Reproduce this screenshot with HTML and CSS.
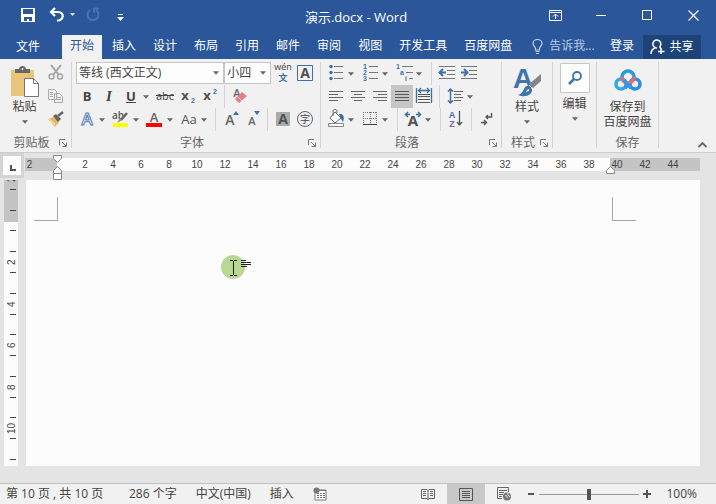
FILE: index.html
```html
<!DOCTYPE html>
<html lang="zh-CN">
<head>
<meta charset="utf-8">
<title>演示.docx - Word</title>
<link rel="stylesheet" href="styles.css">
</head>
<body>
<svg class="defs" aria-hidden="true">
  <symbol id="caret" viewBox="0 0 7 4"><path d="M0 0h7L3.500 4z" fill="#666"/></symbol>
  <symbol id="launch" viewBox="0 0 8 8"><path d="M.5 6V.5H6M3 3l4 4M7.500 3.500v4h-4" fill="none" stroke="#777"/></symbol>
</svg>

<header class="titlebar">
  <div class="quick">
    <button class="qbtn" aria-label="保存"><svg width="16" height="16" viewBox="0 0 16 16"><path d="M1 1h14v14H1z" fill="#fff"/><path d="M4 2h9v5H3V2z" fill="#2b579a"/><path d="M4 10h8v4H9v-2H7v2H4z" fill="#2b579a"/></svg></button>
    <button class="qbtn" aria-label="撤消"><svg width="16" height="16" viewBox="0 0 16 16"><path d="M6 1L2 5l4 4M2.500 5H9c7 0 6 9-1 8.500" fill="none" stroke="#fff" stroke-width="2.200"/></svg></button>
    <button class="qcaret" aria-label="撤消选项"><svg width="5" height="3" viewBox="0 0 6 3"><path d="M0 0h6L3 3z" fill="#fff"/></svg></button>
    <button class="qbtn redo" aria-label="重复"><svg width="16" height="16" viewBox="0 0 16 16"><path d="M5 3a5.500 5.500 0 1 0 6 0M9 6V1.500h5" fill="none" stroke="#4a73b0" stroke-width="2"/></svg></button>
    <button class="qbtn more" aria-label="自定义快速访问工具栏"><svg width="7" height="7" viewBox="0 0 7 7"><path d="M1 0h5v1H1zM0 3h7L3.500 7z" fill="#fff"/></svg></button>
  </div>
  <h1 class="doc-title">演示.docx - Word</h1>
  <div class="window-buttons">
    <button aria-label="功能区显示选项"><svg width="13" height="11" viewBox="0 0 13 11"><path d="M.5.5h12v10H.5zM.5 2.500h12M6.500 9V4M4 6.500L6.500 4 9 6.500" fill="none" stroke="#fff"/></svg></button>
    <button aria-label="最小化"><svg width="11" height="11" viewBox="0 0 11 11"><path d="M0 5.500h10" stroke="#fff"/></svg></button>
    <button aria-label="最大化"><svg width="11" height="11" viewBox="0 0 11 11"><path d="M.5.5h9v9h-9z" fill="none" stroke="#fff"/></svg></button>
    <button aria-label="关闭"><svg width="11" height="11" viewBox="0 0 11 11"><path d="M.5.5l10 10M10.500.5l-10 10" stroke="#fff" stroke-width="1.200"/></svg></button>
  </div>
</header>

<nav class="tabs">
  <button class="tab file">文件</button>
  <button class="tab active">开始</button>
  <button class="tab">插入</button>
  <button class="tab">设计</button>
  <button class="tab">布局</button>
  <button class="tab">引用</button>
  <button class="tab">邮件</button>
  <button class="tab">审阅</button>
  <button class="tab">视图</button>
  <button class="tab">开发工具</button>
  <button class="tab">百度网盘</button>
  <label class="tell"><svg width="11" height="15" viewBox="0 0 11 15"><path d="M3.500 11V9.500C3.500 8 1 7 1 4.500a4.500 4 0 0 1 9 0C10 7 7.500 8 7.500 9.500V11zM3.500 12.500h4M4 14.500h3" fill="none" stroke="#c3d2ea" stroke-width="1.200"/></svg><input type="text" placeholder="告诉我..." aria-label="告诉我"></label>
  <button class="tab login">登录</button>
  <button class="share"><svg width="15" height="16" viewBox="0 0 15 16"><path d="M7 9a4 4 0 1 1 2.500-1M5 9c-3 1-4 3-4 6M9.500 8c1 1 1.500 1 2 2M11 9v6M8 12.500h6.500" fill="none" stroke="#fff" stroke-width="1.500"/></svg>共享</button>
</nav>

<main class="ribbon">
  <section class="group clipboard">
    <div class="group-body">
      <button class="big paste"><svg width="30" height="32" viewBox="0 0 30 32"><path d="M1 4h23v26H1z" fill="#e9c47b"/><path d="M5 7V3h4c0-4 7-4 7 0h4v4z" fill="#666"/><circle cx="12.500" cy="3" r="1" fill="#fff"/><path d="M14.500 12.500h9l5 5v13h-14z" fill="#fff" stroke="#777"/><path d="M23.500 12.500v5h5" fill="none" stroke="#777"/></svg><span>粘贴</span><svg class="caret"><use href="#caret"/></svg></button>
      <div class="stack">
        <button class="tool" aria-label="剪切"><svg viewBox="0 0 22 23"><path d="M6 3l8 10M16 3L8 13" stroke="#a3a3a3" stroke-width="2"/><g fill="none" stroke="#a3a3a3" stroke-width="1.500"><circle cx="6.500" cy="14.500" r="2.500"/><circle cx="15" cy="14.500" r="2.500"/></g></svg></button>
        <button class="tool" aria-label="复制"><svg viewBox="0 0 22 23"><path d="M3.500 4.500h6l2 2v8h-8zM9.500 8.500h5l3 3v6h-8z" fill="#f3f3f3" stroke="#aaa"/><path d="M5 7.500h3M5 9.500h3M5 11.500h3M11 12.500h5M11 14.500h5" stroke="#aaa"/></svg></button>
        <button class="tool" aria-label="格式刷"><svg viewBox="0 0 22 23"><path d="M3 11l6-2 5 5-4 5z" fill="#e8b565"/><path d="M5 13l5 4M4 11l6 5" stroke="#fbe3b5"/><path d="M8 8l3-2 5 5-3 3z" fill="#666"/><path d="M13 8l5-4" stroke="#666" stroke-width="2.500"/></svg></button>
      </div>
    </div>
    <footer><span>剪贴板</span><button aria-label="剪贴板设置"><svg><use href="#launch"/></svg></button></footer>
  </section>

  <section class="group font">
    <div class="group-body rows">
      <div class="row">
        <div class="combo family"><select aria-label="字体"><option>等线 (西文正文)</option></select><svg class="caret"><use href="#caret"/></svg></div>
        <div class="combo size"><select aria-label="字号"><option>小四</option></select><svg class="caret"><use href="#caret"/></svg></div>
        <button class="tool" aria-label="拼音指南"><svg viewBox="0 0 22 23"><text x="11" y="8" class="pinyin">wén</text><text x="11" y="19" class="wen">文</text></svg></button>
        <button class="tool" aria-label="字符边框"><svg viewBox="0 0 22 23"><path d="M3.500 3.500h15v15h-15z" fill="none" stroke="#3f6fa8"/><text x="11" y="16" class="ic a14">A</text></svg></button>
      </div>
      <div class="row">
        <button class="tool letter"><b>B</b></button>
        <button class="tool letter serif"><i>I</i></button>
        <button class="tool letter"><u>U</u></button>
        <button class="drop" aria-label="下划线选项"><svg class="caret"><use href="#caret"/></svg></button>
        <button class="tool strike"><s>abc</s></button>
        <button class="tool" aria-label="下标"><svg viewBox="0 0 22 23"><text x="9" y="15" class="ic a13">x</text><text x="17" y="18" class="blue n7">2</text></svg></button>
        <button class="tool" aria-label="上标"><svg viewBox="0 0 22 23"><text x="9" y="15" class="ic a13">x</text><text x="17" y="9" class="blue n7">2</text></svg></button>
        <i class="sep"></i>
        <button class="tool" aria-label="清除所有格式"><svg viewBox="0 0 22 23"><text x="8" y="12" class="ic a11 light">A</text><path d="M6 14l7-7 5 4-8 7z" fill="#e37d8b"/><path d="M8 11l5 5" stroke="#f5d4d9"/></svg></button>
      </div>
      <div class="row">
        <button class="tool" aria-label="文本效果"><svg viewBox="0 0 22 23"><text x="11" y="17" class="effect">A</text></svg></button>
        <button class="drop" aria-label="文本效果选项"><svg class="caret"><use href="#caret"/></svg></button>
        <button class="tool" aria-label="突出显示颜色"><svg viewBox="0 0 22 23"><text x="8" y="11" class="ab">ab</text><path d="M17 5l-6 7" stroke="#666" stroke-width="2.500"/><path d="M10 10l-3 5 5-3z" fill="#888"/><path d="M3 15h15v4H3z" fill="#ff0"/></svg></button>
        <button class="drop" aria-label="突出显示选项"><svg class="caret"><use href="#caret"/></svg></button>
        <button class="tool" aria-label="字体颜色"><svg viewBox="0 0 22 23"><text x="10" y="14" class="ic a13 light">A</text><path d="M2 15h16v4H2z" fill="#f00"/></svg></button>
        <button class="drop" aria-label="字体颜色选项"><svg class="caret"><use href="#caret"/></svg></button>
        <button class="tool aa">Aa</button>
        <button class="drop" aria-label="更改大小写选项"><svg class="caret"><use href="#caret"/></svg></button>
        <i class="sep near"></i>
        <button class="tool" aria-label="增大字号"><svg viewBox="0 0 22 23"><text x="10" y="17" class="ic a14 light">A</text><path d="M13 7l3-4 3 4z" fill="#3f6fa8"/></svg></button>
        <button class="tool" aria-label="减小字号"><svg viewBox="0 0 22 23"><text x="10" y="17" class="ic a11 light">A</text><path d="M12 3h6l-3 4z" fill="#3f6fa8"/></svg></button>
        <i class="sep near"></i>
        <button class="tool" aria-label="字符底纹"><svg viewBox="0 0 22 23"><path d="M4 4h14v14H4z" fill="#aaa"/><text x="11" y="16" class="ic a14">A</text></svg></button>
        <button class="tool" aria-label="带圈字符"><svg viewBox="0 0 22 23"><circle cx="11" cy="11" r="7.500" fill="none" stroke="#666"/><text x="11" y="15" class="ring">字</text></svg></button>
      </div>
    </div>
    <footer><span>字体</span><button aria-label="字体设置"><svg><use href="#launch"/></svg></button></footer>
  </section>

  <section class="group paragraph">
    <div class="group-body rows">
      <div class="row">
        <button class="tool" aria-label="项目符号"><svg viewBox="0 0 22 23"><g fill="#3f6fa8"><circle cx="6" cy="4.500" r="1.700"/><circle cx="6" cy="10.500" r="1.700"/><circle cx="6" cy="16.500" r="1.700"/></g><path d="M9 4.500h9M9 10.500h9M9 16.500h9" stroke="#777"/></svg></button>
        <button class="drop" aria-label="项目符号选项"><svg class="caret"><use href="#caret"/></svg></button>
        <button class="tool" aria-label="编号"><svg viewBox="0 0 22 23"><text x="6" y="7" class="blue n7">1</text><text x="6" y="13" class="blue n7">2</text><text x="6" y="19" class="blue n7">3</text><path d="M10 4.500h9M10 10.500h9M10 16.500h9" stroke="#777"/></svg></button>
        <button class="drop" aria-label="编号选项"><svg class="caret"><use href="#caret"/></svg></button>
        <button class="tool" aria-label="多级列表"><svg viewBox="0 0 22 23"><text x="5" y="7" class="blue n7">1</text><text x="9" y="13" class="blue n7">a</text><text x="13" y="19" class="blue n7">i</text><path d="M9 4.500h11M13 10.500h7M16 16.500h4" stroke="#777"/></svg></button>
        <button class="drop" aria-label="多级列表选项"><svg class="caret"><use href="#caret"/></svg></button>
        <i class="sep"></i>
        <button class="tool" aria-label="减少缩进量"><svg viewBox="0 0 22 23"><path d="M3 4.500h16M11 8.500h8M11 12.500h8M3 16.500h16" stroke="#777"/><path d="M10 10.500H4M7 7l-3.500 3.500L7 14" fill="none" stroke="#3f6fa8" stroke-width="2"/></svg></button>
        <button class="tool" aria-label="增加缩进量"><svg viewBox="0 0 22 23"><path d="M3 4.500h16M11 8.500h8M11 12.500h8M3 16.500h16" stroke="#777"/><path d="M3 10.500h6M6 7l3.500 3.500L6 14" fill="none" stroke="#3f6fa8" stroke-width="2"/></svg></button>
      </div>
      <div class="row">
        <button class="tool" aria-label="左对齐"><svg viewBox="0 0 22 23"><path d="M4 6.500h14M4 9.500h9M4 12.500h14M4 15.500h9" stroke="#666"/></svg></button>
        <button class="tool" aria-label="居中"><svg viewBox="0 0 22 23"><path d="M4 6.500h14M7 9.500h8M4 12.500h14M7 15.500h8" stroke="#666"/></svg></button>
        <button class="tool" aria-label="右对齐"><svg viewBox="0 0 22 23"><path d="M4 6.500h14M9 9.500h9M4 12.500h14M9 15.500h9" stroke="#666"/></svg></button>
        <button class="tool pressed" aria-label="两端对齐" aria-pressed="true"><svg viewBox="0 0 22 23"><path d="M4 6.500h14M4 9.500h14M4 12.500h14M4 15.500h14" stroke="#555"/></svg></button>
        <button class="tool" aria-label="分散对齐"><svg viewBox="0 0 22 23"><path d="M3.500 3v15M18.500 3v15M6 5.500h10M8 3L5.500 5.500 8 8M14 3l2.500 2.500L14 8" fill="none" stroke="#3f6fa8" stroke-width="1.300"/><path d="M5 9.500h12M5 11.500h12M5 14.500h12M5 17.500h12" stroke="#555"/></svg></button>
        <i class="sep"></i>
        <button class="tool" aria-label="行和段落间距"><svg viewBox="0 0 22 23"><path d="M6.500 4v14M4 6.500L6.500 4 9 6.500M4 15.500L6.500 18 9 15.500" fill="none" stroke="#3f6fa8" stroke-width="1.500"/><path d="M10 6.500h9M10 9.500h7M10 12.500h9M10 15.500h7" stroke="#666"/></svg></button>
        <button class="drop" aria-label="间距选项"><svg class="caret"><use href="#caret"/></svg></button>
      </div>
      <div class="row">
        <button class="tool" aria-label="底纹"><svg viewBox="0 0 22 23"><path d="M3.500 15.500h15v3h-15z" fill="#fff" stroke="#888"/><path d="M5 10l5-6 6 6-6 5z" fill="#fff" stroke="#666"/><path d="M8 8V3c0-2 4-2 4 0v2" fill="none" stroke="#666"/><path d="M14 6c4-1 6 3 4 8l-2-3z" fill="#3f6fa8"/></svg></button>
        <button class="drop" aria-label="底纹选项"><svg class="caret"><use href="#caret"/></svg></button>
        <button class="tool" aria-label="边框"><svg viewBox="0 0 22 23"><path d="M4 4.500h14M4 10.500h14M4.500 4v13M11.500 4v13M17.500 4v13" stroke="#777" stroke-dasharray="1 1"/><path d="M4 16.500h14" stroke="#444"/></svg></button>
        <button class="drop" aria-label="边框选项"><svg class="caret"><use href="#caret"/></svg></button>
        <i class="sep"></i>
        <button class="tool" aria-label="中文版式"><svg viewBox="0 0 22 23"><text x="11" y="18" class="ic wideA">A</text><path d="M8 6.500H4M6 4L3.500 6.500 6 9M14 6.500h4M16 4l2.500 2.500L16 9" fill="none" stroke="#3f6fa8" stroke-width="1.500"/></svg></button>
        <button class="drop" aria-label="中文版式选项"><svg class="caret"><use href="#caret"/></svg></button>
        <i class="sep"></i>
        <button class="tool" aria-label="排序"><svg viewBox="0 0 22 23"><text x="7" y="10" class="blue n9">A</text><text x="7" y="19" class="blue n9 z">Z</text><path d="M14.500 3v14M12 14l2.500 3 2.500-3" fill="none" stroke="#555" stroke-width="1.300"/></svg></button>
        <i class="sep"></i>
        <button class="tool" aria-label="显示编辑标记"><svg viewBox="0 0 22 23"><path d="M15.500 5v4H10M12 7l-2 2 2 2M5 14.500h5M8 12l2.500 2.500L8 17" fill="none" stroke="#555" stroke-width="1.400"/></svg></button>
      </div>
    </div>
    <footer><span>段落</span><button aria-label="段落设置"><svg><use href="#launch"/></svg></button></footer>
  </section>

  <section class="group styles">
    <div class="group-body">
      <button class="big"><svg width="30" height="32" viewBox="0 0 30 32"><text x="11" y="22" class="style-a">A</text><path d="M29 8v7l-8 7-4-4z" fill="#858585"/><path d="M17 19l4 4" stroke="#fff"/><path d="M16 20c-5-1-3 7-10 9 7 3 15 0 14-6z" fill="#3f75ad"/><path d="M15 24l2-1v2l-3 1z" fill="#fff"/></svg><span>样式</span><svg class="caret"><use href="#caret"/></svg></button>
    </div>
    <footer><span>样式</span><button aria-label="样式设置"><svg><use href="#launch"/></svg></button></footer>
  </section>

  <section class="group edit">
    <div class="group-body">
      <button class="big"><svg width="30" height="30" viewBox="0 0 30 30"><path d="M.5.5h29v29H.5z" fill="#fdfdfd" stroke="#c6c6c6"/><circle cx="17" cy="13" r="4" fill="none" stroke="#3f75ad" stroke-width="1.800"/><path d="M14 16l-5 5" stroke="#3f75ad" stroke-width="2.500"/></svg><span>编辑</span><svg class="caret"><use href="#caret"/></svg></button>
    </div>
  </section>

  <section class="group save">
    <div class="group-body">
      <button class="big"><svg width="30" height="32" viewBox="0 0 30 32"><g fill="none" stroke-width="3.600"><circle cx="8" cy="18" r="5" stroke="#30a9e8"/><circle cx="22" cy="18" r="5" stroke="#2d8de0"/><path d="M9 11a6 6 0 0 1 12 0" stroke="#249ce4"/><path d="M9 11a6 6 0 0 0 12 0" stroke="#e96872"/><path d="M11 14l7 8M12 22l2-2" stroke="#2f99e3"/></g></svg><span>保存到</span><span>百度网盘</span></button>
    </div>
    <footer><span>保存</span></footer>
  </section>
  <button class="collapse" aria-label="折叠功能区"><svg width="9" height="6" viewBox="0 0 9 6"><path d="M.5 5l4-4 4 4" fill="none" stroke="#666" stroke-width="1.800"/></svg></button>
</main>

<section class="workspace">
  <div class="tab-stop"><button aria-label="制表符"><svg width="6" height="6" viewBox="0 0 6 6"><path d="M1 0v5h5" fill="none" stroke="#555" stroke-width="2"/></svg></button></div>
  <div class="hruler">
    <div class="numbers"><span class="first">2</span><span></span><span>2</span><span>4</span><span>6</span><span>8</span><span>10</span><span>12</span><span>14</span><span>16</span><span>18</span><span>20</span><span>22</span><span>24</span><span>26</span><span>28</span><span>30</span><span>32</span><span>34</span><span>36</span><span>38</span><span>40</span><span>42</span><span>44</span></div>
    <svg class="marker left" width="9" height="25" viewBox="0 0 9 25"><path d="M.5.5h8v3l-4 4-4-4zM4.500 11.500l4 4v3h-8v-3zM.5 18.500h8v6h-8z" fill="#fff" stroke="#888"/></svg>
    <svg class="marker right" width="9" height="8" viewBox="0 0 9 8"><path d="M4.500.5l4 4v3h-8v-3z" fill="#fff" stroke="#888"/></svg>
  </div>
  <div class="vruler"><div class="ticks"><i><span>2</span></i><i></i><i></i><i></i><i><span>2</span></i><i></i><i><span>4</span></i><i></i><i><span>6</span></i><i></i><i><span>8</span></i><i></i><i><span>10</span></i><i></i></div></div>
  <article class="page">
    <i class="corner start"></i><i class="corner end"></i>
    <svg class="pointer" width="32" height="24" viewBox="0 0 32 24"><circle cx="12" cy="12" r="12" fill="#b9d893"/><path d="M9 5.500h3M13 5.500h3M12.500 6v14M9 20.500h3M13 20.500h3" stroke="#222"/><path d="M20 5.500h5M20 7.500h10M20 9.500h10M20 11.500h6" stroke="#222"/></svg>
  </article>
</section>

<footer class="status">
  <span class="pages">第 10 页 , 共 10 页</span>
  <span class="words">286 个字</span>
  <span class="lang">中文(中国)</span>
  <span class="mode">插入</span>
  <button class="macro" aria-label="录制宏"><svg width="14" height="14" viewBox="0 0 14 14"><path d="M3 3h10v10H2V6" fill="#fff" stroke="#777"/><path d="M4 6.500h2M7 6.500h2M10 6.500h2M4 8.500h2M7 8.500h2M10 8.500h2M4 10.500h2M7 10.500h2M10 10.500h2M6 3.500h7" stroke="#777"/><circle cx="3.500" cy="3.500" r="3" fill="#777"/></svg></button>
  <div class="views">
    <button aria-label="阅读视图"><svg width="14" height="13" viewBox="0 0 14 13"><path d="M.5 1.500H6l1 1 1-1h5.500v9H8l-1 1-1-1H.5zM7 2v10M2 3.500h3M2 5.500h3M2 7.500h3M9 3.500h3M9 5.500h3M9 7.500h3" fill="none" stroke="#666"/></svg></button>
    <button class="on" aria-label="页面视图"><svg width="14" height="13" viewBox="0 0 14 13"><path d="M.5.5h13v12H.5zM3 3.500h8M3 5.500h8M3 7.500h8M3 9.500h8" fill="none" stroke="#555"/></svg></button>
    <button aria-label="Web 版式视图"><svg width="14" height="14" viewBox="0 0 14 14"><path d="M5 11.500H.5v-11h11V5M2 3.500h8M2 5.500h5M2 7.500h4M2 9.500h3" fill="none" stroke="#666"/><circle cx="10" cy="9.500" r="4" fill="#777"/><path d="M8 8l2 1v2M11 6v2l2 2" fill="none" stroke="#ddd"/></svg></button>
  </div>
  <button class="zoom-step" aria-label="缩小"><svg width="8" height="8" viewBox="0 0 8 8"><path d="M1 4h6" stroke="#555" stroke-width="2"/></svg></button>
  <input class="zoom" type="range" min="10" max="190" value="100" aria-label="显示比例">
  <button class="zoom-step" aria-label="放大"><svg width="8" height="8" viewBox="0 0 8 8"><path d="M0 4h8M4 0v8" stroke="#555" stroke-width="2"/></svg></button>
  <span class="percent">100%</span>
</footer>
</body>
</html>
```
FILE: styles.css
```css
* { box-sizing: border-box; }

body {
  margin: 0;
  height: 100vh;
  display: flex;
  flex-direction: column;
  overflow: hidden;
  background: #e4e4e4;
  color: #444;
  font: 12px/16px "Open Sans", "Noto Sans CJK SC", sans-serif;
}

button, input, select { font: inherit; color: inherit; }

button {
  border: 0;
  margin: 0;
  padding: 0;
  background: none;
  display: flex;
  align-items: center;
  justify-content: center;
}

svg { display: block; flex: none; }
.defs { position: absolute; width: 0; height: 0; }
.caret { width: 6px; height: 4px; }

/* Title bar */
.titlebar {
  display: grid;
  grid-template-columns: 1fr auto 1fr;
  height: 35px;
  background: #2b579a;
  color: #fff;
}
.quick { display: flex; align-items: center; padding: 0 0 6px 18px; }
.qbtn { width: 20px; height: 20px; margin-right: 9px; }
.qbtn.redo { margin-right: 7px; }
.qcaret { width: 6px; height: 20px; margin: 0 8px 0 -7px; }
.qbtn.more { padding-top: 5px; }
.doc-title { margin: 0; padding-right: 4px; font-size: 13px; font-weight: 400; line-height: 35px; }
.window-buttons { display: flex; justify-content: flex-end; height: 30px; }
.window-buttons button { width: 46px; }

/* Ribbon tabs */
.tabs {
  display: flex;
  height: 24px;
  background: #2b579a;
  color: #fff;
  padding-right: 15px;
}
.tab { padding: 0 8px 2px; margin-right: 1px; white-space: nowrap; }
.tab.file { padding: 0 16px; margin-right: 6px; }
.tab.active { margin-right: 2px; background: #f1f1f1; color: #2b579a; }
.tell { display: flex; align-items: center; gap: 6px; margin-left: 11px; padding-bottom: 2px; flex: 1; color: #b9cae4; }
.tell input { width: 48px; padding: 0; border: 0; background: none; }
.tell input::placeholder { color: #b9cae4; opacity: 1; }
.share { width: 58px; gap: 4px; background: #1d4379; }

/* Ribbon */
.ribbon {
  display: flex;
  height: 94px;
  padding: 3px 0 1px;
  background: #f1f1f1;
  border-bottom: 1px solid #cdcdcd;
}
.group {
  display: flex;
  flex-direction: column;
  padding: 0 5px 0 4px;
  background: linear-gradient(#d2d2d2, #d2d2d2) right top / 1px calc(100% - 3px) no-repeat;
}
.group-body { display: flex; flex: 1; }
.group-body.rows { flex-direction: column; }
.group > footer {
  display: flex;
  height: 16px;
  align-items: center;
  color: #666;
}
.group > footer span { flex: 1; text-align: center; }
.group > footer svg { width: 8px; height: 8px; }
.clipboard { width: 72px; }
.font { width: 249px; }
.paragraph { width: 181px; }
.styles { width: 51px; }
.edit { width: 44px; }
.save { width: 62px; }

.row { display: flex; height: 23px; }
.tool { flex: none; width: 22px; height: 23px; }
.tool > svg { width: 22px; height: 23px; }
.drop { flex: none; width: 12px; height: 23px; padding-right: 4px; }
.pressed { background: #c5c5c5; }
.sep { flex: none; width: 1px; margin: 0 4px; background: #d2d2d2; }
.sep.near { margin-left: 3px; }
.stack { display: flex; flex-direction: column; }

.big { flex: 1; flex-direction: column; justify-content: flex-start; white-space: nowrap; }
.big > svg:first-child { margin: 4px 0 1px; }
.edit .big > svg:first-child { margin: 1px 0 3px; }
.big > .caret { margin-top: 5px; }
.save .big > span { line-height: 15px; }

.combo {
  display: flex;
  align-items: center;
  height: 22px;
  padding-right: 4px;
  background: #fdfdfd;
  border: 1px solid #c6c6c6;
}
.combo select {
  flex: 1;
  min-width: 0;
  padding: 0 0 0 2px;
  border: 0;
  background: none;
  appearance: none;
}
.combo.family { width: 149px; }
.combo.size { width: 47px; margin-right: 1px; }

.letter, .strike, .aa { padding-bottom: 2px; }
.letter { font-size: 13px; }
.letter b, .letter u { font-weight: 700; }
.serif { font-family: "Liberation Serif", serif; font-size: 15px; font-weight: 700; }
.strike { font-size: 11px; }
.aa { font-size: 13px; color: #555; }

svg text { text-anchor: middle; font-family: "Open Sans", "Noto Sans CJK SC", sans-serif; }
.ic { fill: #505050; font-weight: 700; }
.light { font-weight: 600; fill: #666; }
.a11 { font-size: 11px; }
.a13 { font-size: 13px; }
.a14 { font-size: 14px; }
svg .blue { fill: #3f6fa8; font-weight: 700; font-family: "Liberation Sans", sans-serif; }
.n7 { font-size: 7px; }
.n9 { font-size: 9px; }
svg .z { fill: #7a62a5; }
.pinyin { font-size: 9px; fill: #444; }
.wen { font-size: 9px; font-weight: 700; fill: #3f6fa8; }
.ab { font-size: 10px; font-weight: 600; fill: #555; }
.ring { font-size: 10px; fill: #444; }
.effect { font-size: 17px; font-weight: 600; fill: #fff; stroke: #4e7eb5; stroke-width: 1px; }
.wideA { font-size: 15px; }
svg .style-a { font-size: 28px; font-weight: 700; fill: #3f75ad; font-family: "Liberation Sans", sans-serif; }

.collapse { align-self: flex-end; margin: 0 9px 3px auto; }

/* Rulers and page */
.workspace {
  flex: 1;
  min-height: 0;
  display: grid;
  grid-template: 27px 1fr / 26px 1fr;
  padding: 0 16px 17px 0;
}
.tab-stop { width: 24px; height: 25px; padding: 3px; background: #d3d3d3; }
.tab-stop button { width: 18px; height: 19px; padding: 4px 0 0 2px; background: #fcfcfc; }
.hruler {
  position: relative;
  height: 13px;
  margin: 5px 0 0 -1px;
  background: linear-gradient(to right, #c4c4c4 32px, #fcfcfc 32px, #fcfcfc calc(100% - 90px), #c4c4c4 calc(100% - 90px));
}
.numbers { display: flex; overflow: hidden; font: 10px/13px "Liberation Sans", sans-serif; }
.numbers span { flex: none; width: 28px; text-align: center; }
.numbers .first { width: 18px; padding-right: 9px; }
.marker { position: absolute; }
.marker.left { left: 28px; top: -3px; }
.marker.right { right: 85px; top: 8px; }
.vruler {
  width: 14px;
  margin-left: 4px;
  overflow: hidden;
  background: linear-gradient(#c4c4c4 42px, #fcfcfc 42px);
}
.ticks { display: flex; flex-direction: column; height: calc(100% + 5px); margin-top: -1px; }
.ticks i { position: relative; flex: 1; display: flex; align-items: center; padding-left: 6px; font-style: normal; }
.ticks i::after { content: ""; width: 6px; height: 1px; background: #444; }
.ticks span {
  position: absolute;
  left: 1px;
  top: -8px;
  height: 16px;
  writing-mode: vertical-rl;
  transform: rotate(180deg);
  text-align: center;
  font: 10px/13px "Liberation Sans", sans-serif;
}
.page {
  position: relative;
  display: flex;
  justify-content: space-between;
  padding: 17px 64px 0 8px;
  background: #fcfcfc;
}
.corner { width: 24px; height: 24px; border: 0 solid #a6a6a6; border-bottom-width: 1px; }
.corner.start { border-right-width: 1px; }
.corner.end { border-left-width: 1px; }
.pointer { position: absolute; left: 195px; top: 75px; }

/* Status bar */
.status {
  display: flex;
  align-items: center;
  height: 21px;
  padding: 0 19px 0 6px;
  background: #f1f1f1;
  border-top: 1px solid #c2c2c2;
  white-space: nowrap;
}
.status > span { margin-right: 19px; }
.status > .pages { min-width: 104px; }
.views { display: flex; align-self: stretch; margin: 0 4px 0 auto; }
.views button { width: 38px; }
.views .on { background: #c8c8c8; }
.zoom-step { width: 8px; height: 16px; margin-left: 38px; }
.views + .zoom-step { margin-left: 0; }
.zoom + .zoom-step { margin-left: 0; }
.zoom { width: 100px; height: 14px; margin: 0 4px; background: none; appearance: none; }
.zoom::-webkit-slider-runnable-track { height: 1px; background: #999; }
.zoom::-webkit-slider-thumb { appearance: none; width: 4px; height: 11px; margin-top: -5px; background: #555; }
.status > .percent { margin: 0 0 0 15px; }
```
